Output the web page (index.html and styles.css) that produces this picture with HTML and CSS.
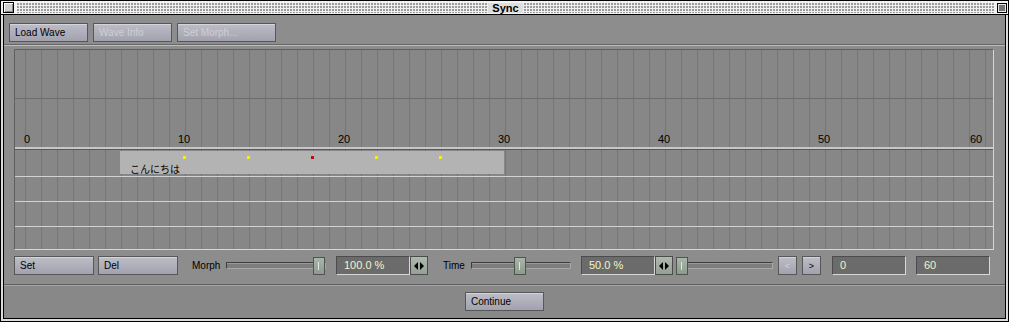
FILE: index.html
```html
<!DOCTYPE html>
<html lang="en">
<head>
    <meta charset="UTF-8">
    <title>Sync</title>
    <link rel="stylesheet" href="styles.css">
</head>
<body>
    <div class="window">
        <!-- Title bar -->
        <div class="titlebar">
            <span class="close-box"></span>
            <div class="stripes"><span class="title">Sync</span></div>
            <span class="zoom-box">
                <svg width="10" height="10" viewBox="0 0 10 10">
                    <rect x="0.5" y="0.5" width="9" height="9" fill="#e8e8e8" stroke="#000"/>
                    <line x1="2" y1="3" x2="8" y2="3" stroke="#000"/>
                    <line x1="2" y1="5" x2="8" y2="5" stroke="#000"/>
                    <line x1="2" y1="7" x2="8" y2="7" stroke="#000"/>
                </svg>
            </span>
        </div>

        <div class="frame">
            <div class="top-area">
                <!-- Toolbar -->
                <div class="toolbar">
                    <button class="btn">Load Wave</button>
                    <button class="btn disabled">Wave Info</button>
                    <button class="btn disabled wide">Set Morph...</button>
                </div>

                <!-- Timeline -->
                <div class="timeline">
                    <div class="ruler">
                        <div class="ruler-top"></div>
                        <div class="ruler-bottom">
                            <span class="tick" style="left: 9px">0</span>
                            <span class="tick" style="left: 163px">10</span>
                            <span class="tick" style="left: 323px">20</span>
                            <span class="tick" style="left: 483px">30</span>
                            <span class="tick" style="left: 643px">40</span>
                            <span class="tick" style="left: 803px">50</span>
                            <span class="tick" style="left: 955px">60</span>
                        </div>
                    </div>
                    <div class="track track-first">
                        <div class="clip">
                            <span class="key" style="left: 63px"></span>
                            <span class="key" style="left: 127px"></span>
                            <span class="key key-active" style="left: 191px"></span>
                            <span class="key" style="left: 255px"></span>
                            <span class="key" style="left: 319px"></span>
                            <span class="clip-text">こんにちは</span>
                        </div>
                    </div>
                    <div class="track track-mid"></div>
                    <div class="track track-mid"></div>
                    <div class="track track-last"></div>
                </div>

                <!-- Controls -->
                <div class="controls">
                    <button class="btn btn-row">Set</button>
                    <button class="btn btn-row ml-4">Del</button>
                    <span class="label label-morph ml-14">Morph</span>
                    <div class="slider ml-4">
                        <div class="groove"></div>
                        <span class="thumb" style="left: 87px"></span>
                    </div>
                    <div class="field ml-10">100.0 %</div>
                    <span class="arrows">
                        <svg width="10" height="8" viewBox="0 0 10 8">
                            <polygon points="4,0 4,8 0,4" fill="#000"/>
                            <polygon points="6,0 6,8 10,4" fill="#000"/>
                        </svg>
                    </span>
                    <span class="label label-time ml-15">Time</span>
                    <div class="slider ml-4">
                        <div class="groove"></div>
                        <span class="thumb" style="left: 43px"></span>
                    </div>
                    <div class="field ml-10">50.0 %</div>
                    <span class="arrows">
                        <svg width="10" height="8" viewBox="0 0 10 8">
                            <polygon points="4,0 4,8 0,4" fill="#000"/>
                            <polygon points="6,0 6,8 10,4" fill="#000"/>
                        </svg>
                    </span>
                    <div class="slider slider-short ml-3">
                        <div class="groove"></div>
                        <span class="thumb" style="left: 0px"></span>
                    </div>
                    <button class="btn nav disabled ml-5">&lt;</button>
                    <button class="btn nav ml-5">&gt;</button>
                    <div class="field ml-11">0</div>
                    <div class="field ml-10">60</div>
                </div>
            </div>

            <div class="bottom-area">
                <button class="btn">Continue</button>
            </div>
        </div>
    </div>
</body>
</html>
```

FILE: styles.css
```css
* {
    box-sizing: border-box;
}
body {
    margin: 0;
    background-color: #ffffff;
    font-family: "Liberation Sans", Arial, sans-serif;
}
.window {
    width: 1009px;
    height: 322px;
    border: 1px solid #000;
    background-color: #dcdcdc;
    display: flex;
    flex-direction: column;
}

/* Title bar */
.titlebar {
    height: 14px;
    border-bottom: 1px solid #000;
    background-color: #f2f2f2;
    display: flex;
    align-items: center;
    padding: 0 1px 0 2px;
    flex-shrink: 0;
}
.close-box {
    width: 11px;
    height: 11px;
    border: 1px solid #000;
    background-color: #cfcfcf;
    box-shadow: inset 1px 1px 0 #fff, inset -1px -1px 0 #8a8a8a;
}
.stripes {
    flex: 1;
    height: 10px;
    margin: 0 3px 0 3px;
    background-color: #f0f0f0;
    background-image: radial-gradient(circle at 1px 1px, #9c9c9c 0.8px, transparent 1px);
    background-size: 3px 3px;
    display: flex;
    justify-content: center;
    align-items: center;
}
.title {
    background-color: #dedede;
    padding: 0 4px;
    font-size: 11px;
    font-weight: bold;
    line-height: 10px;
    color: #000;
}
.zoom-box {
    width: 10px;
    height: 10px;
    display: flex;
}

/* Window body */
.frame {
    flex: 1;
    margin: 0 2px 2px 2px;
    border: 1px solid #000;
    border-top: none;
    display: flex;
    flex-direction: column;
    box-shadow: inset 1px 0 0 #cfcfcf;
}
.top-area {
    background-color: #8d8d8d;
    border-bottom: 1px solid #5e5e5e;
}
.toolbar {
    display: flex;
    gap: 5px;
    padding: 8px 0 2px 5px;
    border-bottom: 1px solid #676767;
    box-shadow: 0 1px 0 #bdbdbd;
}
.bottom-area {
    flex: 1;
    background-color: #888888;
    display: flex;
    justify-content: center;
    padding-top: 7px;
    box-shadow: inset 0 1px 0 #a6a6a6;
}

/* Buttons */
.btn {
    width: 79px;
    height: 19px;
    padding: 0 0 0 5px;
    text-align: left;
    font-family: "Liberation Sans", Arial, sans-serif;
    font-size: 10px;
    color: #000;
    background: linear-gradient(#bdbdc8, #a2a2ae);
    border: 1px solid #575757;
    box-shadow: inset 0 1px 0 #d4d4de;
    border-radius: 0;
}
.btn.wide {
    width: 99px;
}
.btn.btn-row {
    width: 80px;
}
.btn.disabled {
    color: #cfcfd6;
}
.btn.nav {
    width: 19px;
    padding: 0;
    text-align: center;
    font-size: 9px;
}

/* Timeline panel */
.timeline {
    margin: 4px 0 0 10px;
    width: 980px;
    border: 1px solid #5f5f5f;
    border-right-color: #d6d6d6;
    border-bottom-color: #d6d6d6;
    background-color: #878787;
    background-image: repeating-linear-gradient(to right, transparent 0 10px, #767676 10px 11px, transparent 11px 16px);
}
.ruler {
    border-bottom: 2px solid #c6c6c6;
}
.ruler-top {
    height: 49px;
    border-bottom: 1px solid #6c6c6c;
}
.ruler-bottom {
    position: relative;
    height: 48px;
}
.tick {
    position: absolute;
    bottom: 2px;
    font-size: 11px;
    line-height: 12px;
    color: #000;
}
.track {
    border-top: 1px solid #d2d2d2;
    height: 25px;
}
.track-first {
    border-top: 1px solid #5a5a5a;
    height: 27px;
    padding-top: 1px;
}
.track-last {
    height: 23px;
}
.clip {
    position: relative;
    margin-left: 105px;
    width: 384px;
    height: 23px;
    background-color: #b3b3b3;
    padding: 8px 0 0 10px;
}
.clip-text {
    font-family: "Noto Sans CJK JP", sans-serif;
    font-size: 10px;
    line-height: 12px;
    color: #000;
}
.key {
    position: absolute;
    top: 5px;
    width: 3px;
    height: 3px;
    background-color: #f4f400;
}
.key-active {
    background-color: #e00000;
}

/* Controls row */
.controls {
    display: flex;
    align-items: center;
    height: 19px;
    margin: 6px 0 9px 0;
    padding-left: 10px;
}
.ml-3 { margin-left: 3px; }
.ml-4 { margin-left: 4px; }
.ml-5 { margin-left: 5px; }
.ml-10 { margin-left: 10px; }
.ml-11 { margin-left: 11px; }
.ml-14 { margin-left: 14px; }
.ml-15 { margin-left: 15px; }
.label {
    font-size: 10px;
    color: #000;
}
.label-morph {
    width: 30px;
}
.label-time {
    width: 24px;
}
.slider {
    position: relative;
    width: 100px;
    height: 19px;
    display: flex;
    align-items: center;
}
.slider-short {
    width: 97px;
}
.groove {
    width: 100%;
    height: 7px;
    background-color: #7d7d7d;
    border: 1px solid #3e3e3e;
    border-right-color: #a8a8a8;
    border-bottom-color: #a8a8a8;
    box-shadow: inset 0 1px 0 #9a9a9a;
}
.thumb {
    position: absolute;
    top: 1px;
    width: 12px;
    height: 18px;
    background: linear-gradient(#aab6aa, #8e9a8e);
    border: 1px solid #4d554d;
}
.thumb::after {
    content: "";
    position: absolute;
    left: 4px;
    top: 4px;
    width: 1px;
    height: 8px;
    background-color: #dfe8df;
}
.field {
    width: 74px;
    height: 19px;
    padding-left: 7px;
    background-color: #6b6b6b;
    border: 1px solid #4c4c4c;
    border-right-color: #d8d8d8;
    border-bottom-color: #d8d8d8;
    color: #f4f4c6;
    font-size: 11px;
    line-height: 17px;
}
.arrows {
    width: 18px;
    height: 19px;
    background: linear-gradient(#aebaae, #94a094);
    border: 1px solid #4c4c4c;
    display: flex;
    align-items: center;
    justify-content: center;
}
```
